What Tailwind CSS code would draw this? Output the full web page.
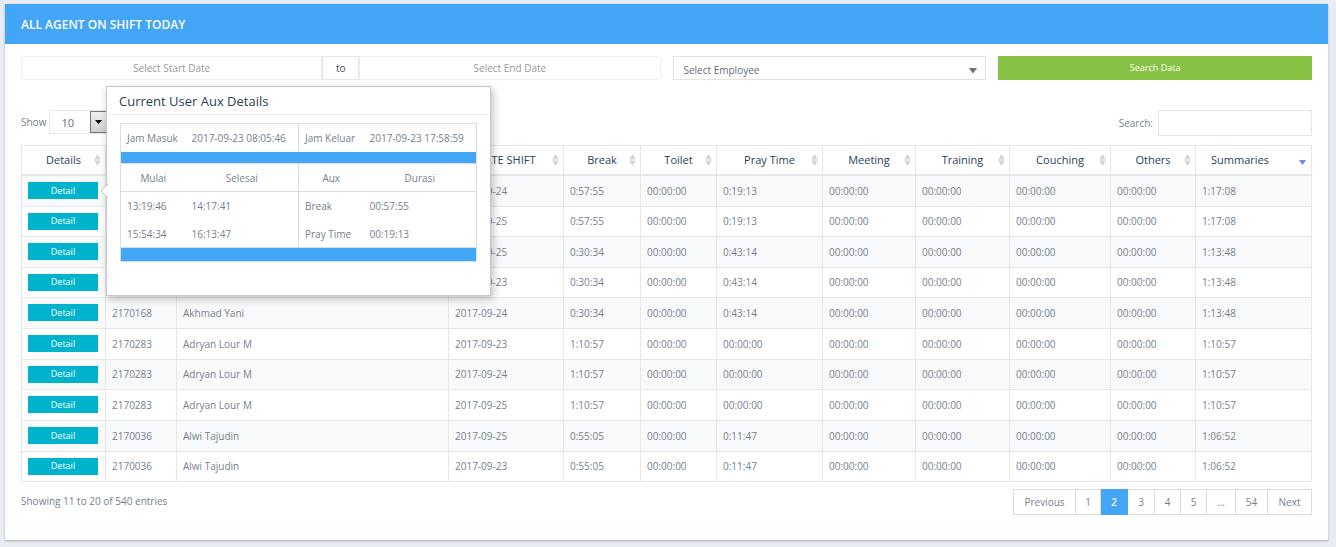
<!DOCTYPE html>
<html lang="id">
<head>
<meta charset="utf-8">
<title>All Agent On Shift Today</title>
<script src="https://cdn.jsdelivr.net/npm/@tailwindcss/browser@4"></script>
</head>
<body class="min-h-screen bg-[#e9edf3] pt-1 pr-2 pb-1 pl-[5px] font-['Open_Sans',sans-serif] text-[10px] leading-4 text-[#75808f]">
<main class="bg-white pb-[25px] shadow-[0_1px_2px_rgba(0,0,0,0.3)]">
  <header class="flex h-10 items-center bg-[#42a5f5] px-4">
    <h1 class="pt-px text-xs font-semibold text-white">ALL AGENT ON SHIFT TODAY</h1>
  </header>

  <div class="px-4 pt-3">
    <form class="grid grid-cols-4 gap-3">
      <div class="col-span-2 flex h-6">
        <input type="text" aria-label="Start date" placeholder="Select Start Date" class="min-w-0 flex-1 rounded-l-sm border border-[#eeeeef] text-center placeholder:text-[#999]">
        <span class="flex w-[37px] items-center justify-center border border-[#e1e5ec] text-[#3f4f66]">to</span>
        <input type="text" aria-label="End date" placeholder="Select End Date" class="min-w-0 flex-1 rounded-r-sm border border-[#eeeeef] text-center placeholder:text-[#999]">
      </div>
      <div class="relative h-6">
        <select aria-label="Employee" class="h-full w-full appearance-none border border-[#dfe2e8] px-2.5 pt-1 text-[#5f6b7c]">
          <option>Select Employee</option>
        </select>
        <svg class="pointer-events-none absolute top-3 right-[9px] h-[5px] w-2" viewBox="0 0 8 5" fill="#66727f"><path d="M0 0h8L4.500 5h-1z"/></svg>
      </div>
      <button type="button" class="h-6 bg-[#88c244] text-[9px] text-white">Search Data</button>
    </form>

    <div class="mt-[30px] flex items-start justify-between">
      <div class="flex items-center gap-[3px]">
        <label for="length">Show</label>
        <div class="relative h-6 w-[58px]">
          <select id="length" class="h-full w-full appearance-none border border-[#e5e6e8] pt-0.5 pl-[11px] text-[11px] text-[#666f7d]"><option>10</option></select>
          <span class="pointer-events-none absolute top-px right-0 flex h-[22px] w-[17px] items-center justify-center border border-[#777] bg-linear-to-b from-[#f0f0f0] to-[#cfcfcf]">
            <svg class="h-1 w-[7px]" viewBox="0 0 7 4"><path d="M0 0h7L3.500 4z"/></svg>
          </span>
        </div>
      </div>
      <div class="flex items-center gap-[5px]">
        <label for="search">Search:</label>
        <input id="search" type="search" class="h-[26px] w-[154px] border border-[#e5e6e8] px-2">
      </div>
    </div>

    <table class="mt-[9px] w-full table-fixed border-collapse border border-[#e7e7e7]">
      <colgroup>
        <col class="w-[84px]"><col class="w-[71px]"><col><col class="w-[115px]"><col class="w-[77px]"><col class="w-[76px]"><col class="w-[106px]"><col class="w-[93px]"><col class="w-[94px]"><col class="w-[101px]"><col class="w-[85px]"><col class="w-[116px]">
      </colgroup>
      <thead><tr id="head" class="h-[29px] border-b-2 border-[#e7e7e7] text-[#2b4158]"></tr></thead>
      <tbody id="rows"></tbody>
    </table>

    <div class="mt-[7px] flex items-start justify-between">
      <p class="pt-1">Showing 11 to 20 of 540 entries</p>
      <nav aria-label="Pages" class="flex h-[26px] border-l border-[#ddd] *:flex *:items-center *:justify-center *:border *:border-l-0 *:border-[#ddd]">
        <a href="#" class="w-[62px]">Previous</a>
        <a href="#" class="w-[25px]">1</a>
        <a href="#" aria-current="page" class="w-[27px] border-[#42a5f5]! bg-[#42a5f5] font-semibold text-white">2</a>
        <a href="#" class="w-[27px]">3</a>
        <a href="#" class="w-[26px]">4</a>
        <a href="#" class="w-[26px]">5</a>
        <span class="w-[29px]">...</span>
        <a href="#" class="w-8">54</a>
        <a href="#" class="w-11">Next</a>
      </nav>
    </div>
  </div>
</main>

<template id="popover">
  <div role="dialog" aria-label="Current User Aux Details" class="absolute -top-24 left-full z-10 ml-2 h-[210px] w-[385px] border border-[#c8c8c8] bg-white shadow-[2px_3px_8px_rgba(0,0,0,0.25)]">
    <svg class="absolute top-[97px] -left-[7px] h-[14px] w-2" viewBox="0 0 8 14"><path d="M8 0L1 7l7 7" fill="#fff" stroke="#c4c4c4"/></svg>
    <h2 class="mx-px border-b border-[#ececec] px-[11px] pt-[6px] pb-[5px] text-[13px] leading-4 text-[#2b4158]">Current User Aux Details</h2>
    <table class="mt-2 ml-[13px] w-[357px] table-fixed border-collapse border border-[#ddd] text-left">
      <colgroup><col class="w-[65px]"><col><col class="w-[65px]"><col class="w-[113px]"></colgroup>
      <tbody>
        <tr class="h-7"><td class="px-1.5">Jam Masuk</td><td class="px-1.5">2017-09-23 08:05:46</td><td class="border-l border-[#ddd] px-1.5">Jam Keluar</td><td class="px-1.5">2017-09-23 17:58:59</td></tr>
        <tr class="h-3"><td colspan="4" class="bg-[#42a5f5]"></td></tr>
        <tr class="h-7 border-y border-[#ddd] text-center"><td>Mulai</td><td>Selesai</td><td class="border-l border-[#ddd]">Aux</td><td>Durasi</td></tr>
        <tr class="h-7"><td class="px-1.5">13:19:46</td><td class="px-1.5">14:17:41</td><td class="border-l border-[#ddd] px-1.5">Break</td><td class="px-1.5">00:57:55</td></tr>
        <tr class="h-7"><td class="px-1.5">15:54:34</td><td class="px-1.5">16:13:47</td><td class="border-l border-[#ddd] px-1.5">Pray Time</td><td class="px-1.5">00:19:13</td></tr>
        <tr class="h-[14px] border-t border-[#ddd]"><td colspan="4" class="bg-[#42a5f5]"></td></tr>
      </tbody>
    </table>
  </div>
</template>

<script>
  const heads = ['Details', 'User ID', 'Name', 'DATE SHIFT', 'Break', 'Toilet', 'Pray Time', 'Meeting', 'Training', 'Couching', 'Others', 'Summaries'];
  const both = '<svg class="absolute right-1 top-2 h-3 w-[7px]" viewBox="0 0 7 12" fill="#d6d6d6"><path d="M3.500 0L7 5.500H0zM3.500 12L0 6.500h7z"/></svg>';
  const down = '<svg class="absolute right-[5px] top-[14px] h-[5px] w-[7px]" viewBox="0 0 7 5" fill="#7b84dd"><path d="M0 0h7L3.500 5z"/></svg>';
  document.getElementById('head').innerHTML = heads.map((h, i) => {
    const last = i === heads.length - 1;
    return `<th class="border-r border-[#e7e7e7] p-0 font-normal"><button type="button" class="relative block h-7 w-full text-[11px] ${last ? 'pr-[27px]' : ''}">${h}${last ? down : both}</button></th>`;
  }).join('');

  const z = '00:00:00';
  const data = [
    ['2170168', 'Akhmad Yani', '2017-09-24', '0:57:55', '0:19:13', '1:17:08'],
    ['2170168', 'Akhmad Yani', '2017-09-25', '0:57:55', '0:19:13', '1:17:08'],
    ['2170168', 'Akhmad Yani', '2017-09-25', '0:30:34', '0:43:14', '1:13:48'],
    ['2170168', 'Akhmad Yani', '2017-09-23', '0:30:34', '0:43:14', '1:13:48'],
    ['2170168', 'Akhmad Yani', '2017-09-24', '0:30:34', '0:43:14', '1:13:48'],
    ['2170283', 'Adryan Lour M', '2017-09-23', '1:10:57', z, '1:10:57'],
    ['2170283', 'Adryan Lour M', '2017-09-24', '1:10:57', z, '1:10:57'],
    ['2170283', 'Adryan Lour M', '2017-09-25', '1:10:57', z, '1:10:57'],
    ['2170036', 'Alwi Tajudin', '2017-09-25', '0:55:05', '0:11:47', '1:06:52'],
    ['2170036', 'Alwi Tajudin', '2017-09-23', '0:55:05', '0:11:47', '1:06:52']
  ];
  document.getElementById('rows').innerHTML = data.map(([id, name, date, brk, pray, sum], i) => {
    const cells = [id, name, date, brk, z, pray, z, z, z, z, sum];
    const height = i === 1 || i === 3 || i === 6 || i === 9 ? 'h-[30px]' : 'h-[31px]';
    return `<tr class="${height} border-b border-[#e7e7e7] odd:bg-[#f8f9fb]">
      <td class="border-r border-[#e7e7e7] px-1.5 py-0"><div class="relative flex w-[70px]"><button type="button" class="h-[17px] w-full bg-[#00b3cc] text-[9px] text-white">Detail</button></div></td>
      ${cells.map(c => `<td class="border-r border-[#e7e7e7] px-1.5 py-0">${c}</td>`).join('')}</tr>`;
  }).join('');
  document.querySelector('#rows td div').append(document.getElementById('popover').content.cloneNode(true));
</script>
</body>
</html>
